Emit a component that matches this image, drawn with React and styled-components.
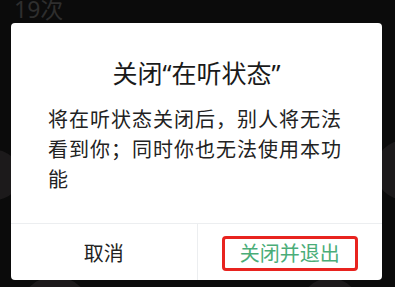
import React from 'react'
import styled, { createGlobalStyle } from 'styled-components'

const GlobalStyle = createGlobalStyle`
  html, body {
    margin: 0;
    padding: 0;
    background: #0b0b0b;
  }
  body {
    font-family: "Noto Sans CJK SC", "Noto Sans", sans-serif;
  }
`

export default function App() {
  return (
    <Screen>
      <GlobalStyle />
      <Backdrop>
        <Blob $left={-30} $top={150} $size={50} />
        <Blob $left={375} $top={140} $size={60} />
        <Blob $left={20} $top={276} $size={70} />
        <Blob $left={300} $top={278} $size={60} />
      </Backdrop>
      <Counter>19次</Counter>
      <Dialog>
        <Content>
          <Title>关闭“在听状态”</Title>
          <Message>将在听状态关闭后，别人将无法看到你；同时你也无法使用本功能</Message>
        </Content>
        <Actions>
          <ActionButton>取消</ActionButton>
          <ActionButton $primary>
            关闭并退出
            <Highlight />
          </ActionButton>
        </Actions>
      </Dialog>
    </Screen>
  )
}

const Screen = styled.div`
  position: relative;
  width: 395px;
  height: 287px;
  overflow: hidden;
  padding: 0 13px 0 11px;
  box-sizing: border-box;
  background: #0b0b0b;
`

const Backdrop = styled.div`
  position: absolute;
  inset: 0;
  z-index: 0;
`

const Blob = styled.div`
  position: absolute;
  left: ${p => p.$left}px;
  top: ${p => p.$top}px;
  width: ${p => p.$size}px;
  height: ${p => p.$size}px;
  border-radius: 50%;
  background: #1c1a1b;
`

const Counter = styled.div`
  position: relative;
  z-index: 1;
  height: 23px;
  padding-left: 3px;
  font-family: "Noto Sans", "Noto Sans CJK SC", sans-serif;
  font-size: 23px;
  line-height: 19px;
  color: #2e2e2e;
`

const Dialog = styled.div`
  position: relative;
  z-index: 1;
  width: 371px;
  height: 257px;
  background: #fff;
  border-radius: 4px;
  display: flex;
  flex-direction: column;
  overflow: hidden;
`

const Content = styled.div`
  flex: 1;
  padding: 38px 37px 0;
  display: flex;
  flex-direction: column;
  gap: 19px;
`

const Title = styled.div`
  text-align: center;
  font-family: "Noto Sans", "Noto Sans CJK SC", sans-serif;
  font-size: 25px;
  line-height: 24px;
  color: #1a1a1a;
`

const Message = styled.div`
  font-size: 20px;
  line-height: 30px;
  letter-spacing: 1px;
  color: #222;
`

const Actions = styled.div`
  height: 56px;
  display: grid;
  grid-template-columns: 1fr 1fr;
  border-top: 1px solid #eceef0;
`

const ActionButton = styled.div`
  position: relative;
  display: flex;
  align-items: center;
  justify-content: center;
  font-size: 20px;
  color: ${p => (p.$primary ? '#4aad78' : '#222')};
  border-left: ${p => (p.$primary ? '1px solid #eceef0' : 'none')};
`

const Highlight = styled.div`
  position: absolute;
  left: 24px;
  top: 12px;
  width: 136px;
  height: 35px;
  box-sizing: border-box;
  border: 3px solid #e8231f;
  border-radius: 4px;
`
